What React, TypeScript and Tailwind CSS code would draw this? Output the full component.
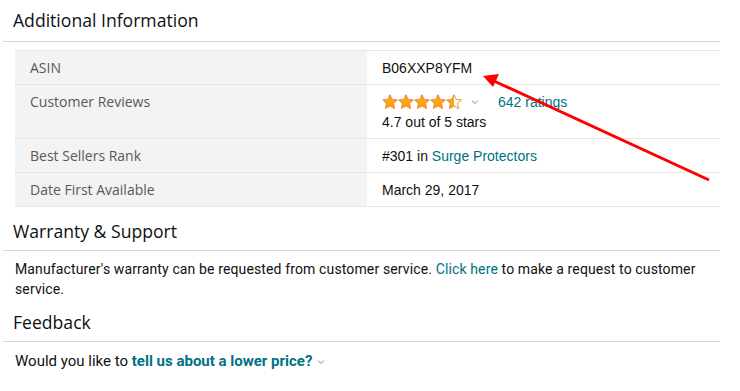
import React from 'react'

const ember = { fontFamily: '"Open Sans", "Noto Sans", Arial, sans-serif' }
const arial = { fontFamily: '"Liberation Sans", Arial, sans-serif' }
const body = { fontFamily: 'Roboto, Arial, sans-serif' }

const Star = ({ half = false }: { half?: boolean }) => (
  <svg width="16" height="16" viewBox="0 0 24 24" className="block">
    <defs>
      <linearGradient id="halfStar">
        <stop offset="50%" stopColor="#FFA41C" />
        <stop offset="50%" stopColor="#ffffff" />
      </linearGradient>
    </defs>
    <path
      d="M12 1l3.3 7.1 7.7.8-5.8 5.2 1.7 7.7L12 17.9l-6.9 3.9 1.7-7.7L1 8.9l7.7-.8z"
      fill={half ? 'url(#halfStar)' : '#FFA41C'}
      stroke="#E67A00"
      strokeWidth="1.2"
      strokeLinejoin="round"
    />
  </svg>
)

const Chevron = () => (
  <svg width="8" height="6" viewBox="0 0 8 6" className="block">
    <path d="M1 1.5l3 3 3-3" fill="none" stroke="#888" strokeWidth="1" />
  </svg>
)

const Row = ({ label, children, last = false }: { label: string, children: React.ReactNode, last?: boolean }) => (
  <div className={`grid grid-cols-[352px_1fr] border-t border-[#e7e7e7] ${last ? 'border-b' : ''}`}>
    <div className="bg-[#f3f3f3] px-[15px] pt-[7px] pb-[6px] text-[14px] leading-[20px] text-[#565959]" style={ember}>
      {label}
    </div>
    <div className="px-[15px] pt-[7px] pb-[6px] text-[14px] leading-[20px] text-[#0f1111]" style={arial}>
      {children}
    </div>
  </div>
)

export default function App() {
  return (
    <div className="relative w-[740px] h-[391px] bg-white overflow-hidden">
      <div className="w-[717px] ml-[3px] pt-[8px]">
        <h2 className="pl-[10px] text-[17.6px] leading-[24px] text-[#0f1111] pb-[9px] border-b border-[#d5d5d5]" style={ember}>
          Additional Information
        </h2>

        <div className="ml-[12px] mt-[8px]">
          <Row label="ASIN">B06XXP8YFM</Row>
          <Row label="Customer Reviews">
            <div className="flex items-center h-[20px]">
              <div className="flex gap-[-1px]">
                <Star /><Star /><Star /><Star /><Star half />
              </div>
              <span className="ml-[9px]"><Chevron /></span>
              <span className="ml-[19px] text-[#007185]">642 ratings</span>
            </div>
            <div>4.7 out of 5 stars</div>
          </Row>
          <Row label="Best Sellers Rank">
            #301 in <span className="text-[#007185]">Surge Protectors</span>
          </Row>
          <Row label="Date First Available" last>March 29, 2017</Row>
        </div>

        <h2 className="mt-[12px] pl-[10px] text-[17.6px] leading-[24px] text-[#0f1111] pb-[7px] border-b border-[#d5d5d5]" style={ember}>
          Warranty &amp; Support
        </h2>
        <p className="pl-[12px] pt-[8px] text-[14px] leading-[20px] tracking-[0.13px] text-[#0f1111]" style={body}>
          Manufacturer's warranty can be requested from customer service. <a className="text-[#007185]">Click here</a> to make a request to customer service.
        </p>

        <h2 className="mt-[11px] pl-[10px] text-[17.6px] leading-[24px] text-[#0f1111] pb-[7px] border-b border-[#d5d5d5]" style={ember}>
          Feedback
        </h2>
        <div className="flex items-center pl-[12px] pt-[9px] text-[15px] leading-[20px] text-[#0f1111]" style={body}>
          <span className="whitespace-pre">Would you like to </span>
          <a className="font-bold text-[#007185]">tell us about a lower price?</a>
          <span className="ml-[5px] mt-[2px]"><Chevron /></span>
        </div>
      </div>

      <svg className="absolute left-0 top-0 pointer-events-none" width="740" height="391">
        <line x1="709" y1="180" x2="494" y2="81" stroke="#ff0000" strokeWidth="3" />
        <polygon points="483,76 499,74 493,87" fill="#ff0000" />
      </svg>
    </div>
  )
}
